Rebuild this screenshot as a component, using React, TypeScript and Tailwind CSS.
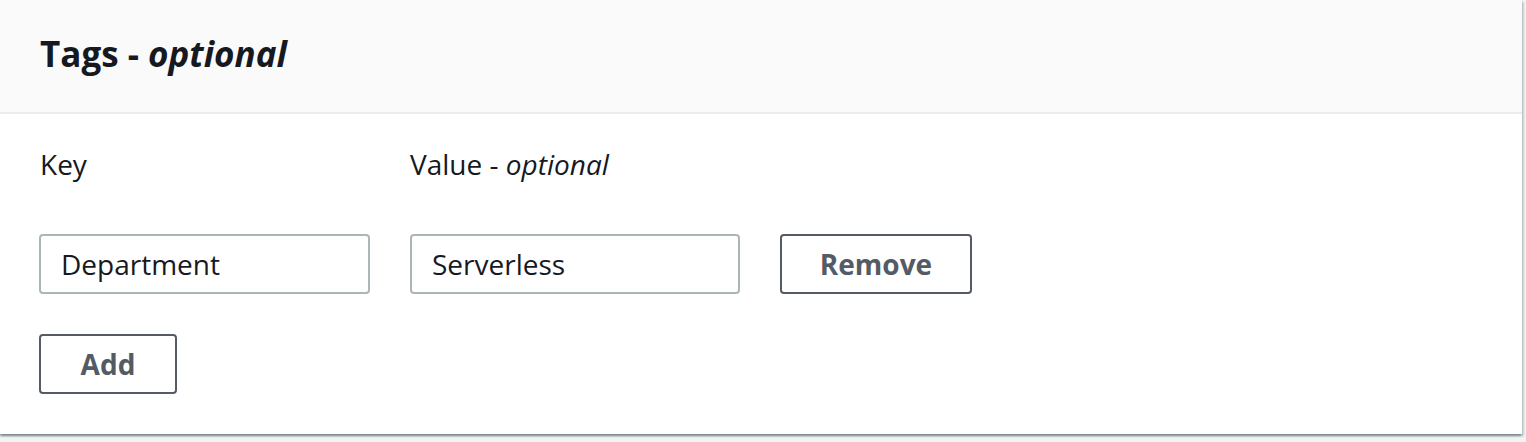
export default function App() {
  return (
    <div className="min-h-[442px] w-[1526px] bg-[#f2f3f3] font-['Open_Sans',sans-serif] text-[#16191f]">
      <div className="w-[1522px] bg-white shadow-[0_2px_2px_0_rgba(0,28,36,0.3),2px_2px_2px_0_rgba(0,28,36,0.15),-2px_2px_2px_0_rgba(0,28,36,0.15)]">
        <div className="flex h-[114px] items-center border-b-2 border-[#eaeded] bg-[#fafafa] px-[40px] pb-[4px]">
          <h2 className="text-[35px] font-bold leading-[48px]">
            Tags - <span className="italic">optional</span>
          </h2>
        </div>
        <div className="px-[39px] pb-[40px] pt-[30px]">
          <div className="flex gap-[40px] text-[28px] leading-[40px]">
            <div className="w-[331px] pl-px">Key</div>
            <div className="w-[330px]">
              Value - <span className="italic">optional</span>
            </div>
          </div>
          <div className="mt-[50px] flex gap-[40px]">
            <input
              readOnly
              value="Department"
              className="h-[60px] w-[331px] rounded-[4px] border-2 border-[#aab7b8] bg-white px-[20px] text-[28px] text-[#16191f] outline-none"
            />
            <input
              readOnly
              value="Serverless"
              className="h-[60px] w-[330px] rounded-[4px] border-2 border-[#aab7b8] bg-white px-[20px] text-[28px] text-[#16191f] outline-none"
            />
            <button className="h-[60px] w-[192px] rounded-[4px] border-2 border-[#545b64] bg-white text-[28px] font-bold text-[#545b64]">
              Remove
            </button>
          </div>
          <button className="mt-[40px] h-[60px] w-[138px] rounded-[4px] border-2 border-[#545b64] bg-white text-[28px] font-bold text-[#545b64]">
            Add
          </button>
        </div>
      </div>
    </div>
  );
}
